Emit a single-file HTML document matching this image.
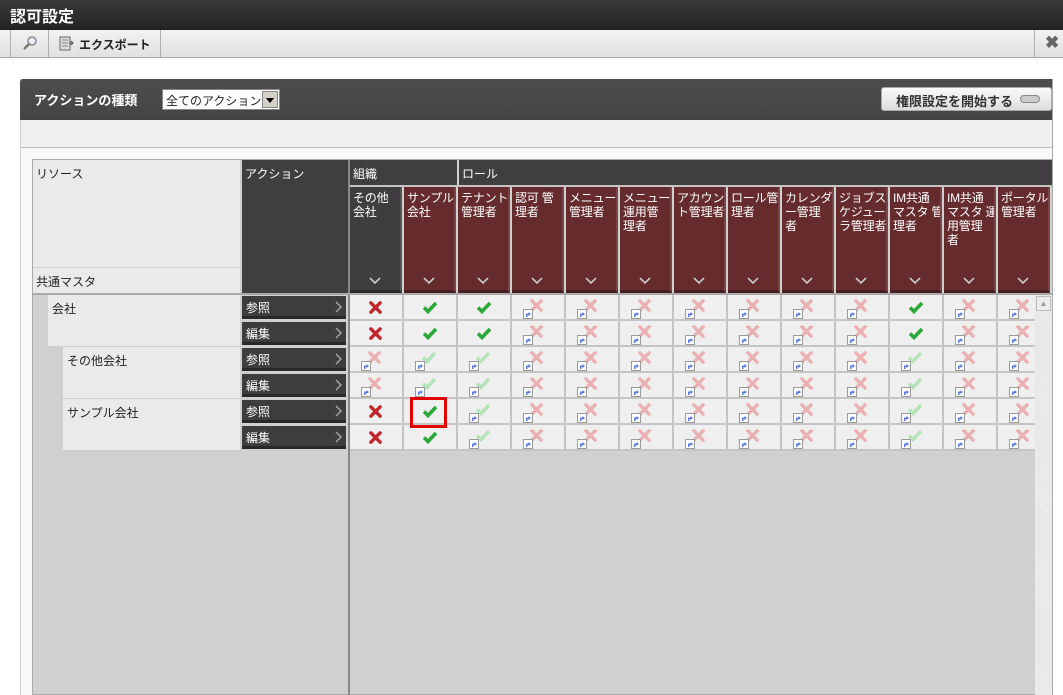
<!DOCTYPE html>
<html><head><meta charset="utf-8">
<style>
*{box-sizing:border-box;margin:0;padding:0}
body{width:1063px;height:695px;overflow:hidden;background:#fff;font-family:"Liberation Sans","Noto Sans CJK JP",sans-serif;font-size:12px;position:relative;color:#222}
.a{position:absolute}
svg{display:block}
.cell{position:absolute;width:52px;height:24px;background:#efefef}
.ic{position:absolute}
.hd{position:absolute;top:187px;width:52px;height:106px;background:#652b2d;color:#fff;font-size:12px;line-height:14px;padding:4px 0 5px 3px;border-right:2px solid #7a4546;border-bottom:3px solid #4a1f21;white-space:nowrap;overflow:hidden;letter-spacing:-0.2px}
.hd.d{background:#3f3d3f;border-right-color:#555;border-bottom-color:#2d2b2d}
.chev{position:absolute;left:19px;top:90px}
.btn{position:absolute;left:242px;width:104px;height:23px;background:#3e3c3e;color:#fff;font-size:12px;padding:3px 4px;border-bottom:3px solid #2a282a}
.btn .gt{position:absolute;right:4px;top:5px}
</style></head><body>
<svg width="0" height="0" style="position:absolute">
<defs>
<symbol id="sx" viewBox="0 0 14 14"><path d="M2 2L12 12M12 2L2 12" stroke="currentColor" stroke-width="3.6" stroke-linecap="round"/></symbol>
<symbol id="sc" viewBox="0 0 16 14"><path d="M2 7.5L6 11.5L14 3" fill="none" stroke="currentColor" stroke-width="3.6" stroke-linejoin="miter"/></symbol>
<symbol id="sl" viewBox="0 0 10 10"><rect x="0.5" y="0.5" width="9" height="9" fill="#fff" stroke="#9a9a9a"/><path d="M3 8V4.5H5.5V3L8 5L5.5 7V6H4.5V8Z" fill="#5a7ae0"/></symbol>
<symbol id="sv" viewBox="0 0 12 7"><path d="M1 1L6 6L11 1" fill="none" stroke="#c9c9c9" stroke-width="1.6"/></symbol>
<symbol id="sg" viewBox="0 0 7 12"><path d="M1 1L6 6L1 11" fill="none" stroke="#aaa" stroke-width="1.4"/></symbol>
</defs></svg>

<div class="a" style="left:0;top:0;width:1063px;height:30px;background:linear-gradient(#3a3a3a,#222);color:#fff;font-size:16px;font-weight:bold;padding:3px 10px">認可設定</div>
<div class="a" style="left:0;top:30px;width:1063px;height:28px;background:linear-gradient(#f2f2f2,#e0e0e0);border-bottom:1px solid #a8a8a8"></div>
<div class="a" style="left:10px;top:30px;width:1px;height:27px;background:#b0b0b0"></div>
<div class="a" style="left:48px;top:30px;width:1px;height:27px;background:#b0b0b0"></div>
<div class="a" style="left:160px;top:30px;width:1px;height:27px;background:#b0b0b0"></div>
<div class="a" style="left:1034px;top:30px;width:1px;height:27px;background:#b0b0b0"></div>
<svg class="a" style="left:22px;top:35px" width="16" height="16" viewBox="0 0 16 16"><circle cx="10" cy="6" r="4" fill="#eef" stroke="#888" stroke-width="1.5"/><path d="M7 9L2 14" stroke="#777" stroke-width="2.4"/></svg>
<svg class="a" style="left:59px;top:36px" width="16" height="15" viewBox="0 0 16 15"><rect x="1" y="1" width="10" height="13" fill="#ddd" stroke="#666"/><path d="M3 4h6M3 7h6M3 10h6" stroke="#888"/><path d="M10 7h4M12 5l2 2-2 2" stroke="#555" fill="none"/></svg>
<div class="a" style="left:79px;top:36px;font-size:12px;font-weight:bold;color:#222">エクスポート</div>
<div class="a" style="left:1045px;top:33px;font-size:17px;font-weight:bold;color:#666">✖</div>

<div class="a" style="left:20px;top:79px;width:1043px;height:616px;background:#f8f8f8;border-left:1px solid #ccc"></div>
<div class="a" style="left:20px;top:79px;width:1043px;height:41px;background:linear-gradient(#4d4d4d,#444);border-radius:3px 3px 0 0"></div>
<div class="a" style="left:34px;top:90px;color:#fff;font-size:13px;font-weight:bold">アクションの種類</div>
<div class="a" style="left:162px;top:89px;width:118px;height:21px;background:#fff;border:1px solid #888;font-size:12px;padding:2px 3px">全てのアクション</div>
<div class="a" style="left:262px;top:91px;width:16px;height:17px;background:#d4d0c8;border:1px solid #888"><div style="margin:6px auto 0;width:0;height:0;border-left:4px solid transparent;border-right:4px solid transparent;border-top:5px solid #000"></div></div>
<div class="a" style="left:881px;top:87px;width:171px;height:24px;background:linear-gradient(#fafafa,#ddd);border:1px solid #aaa;border-radius:3px;font-weight:bold;font-size:13px;padding:3px 14px;color:#333">権限設定を開始する</div>
<div class="a" style="left:1020px;top:95px;width:20px;height:8px;border-radius:4px;background:#ccc;border:1px solid #888"></div>
<div class="a" style="left:21px;top:120px;width:1042px;height:28px;background:#efefef;border-bottom:1px solid #bbb"></div>

<div class="a" style="left:32px;top:159px;width:1021px;height:536px;background:#d1d0d1;border:1px solid #aaa"></div>
<div class="a" style="left:33px;top:160px;width:207px;height:107px;background:#ebe9eb;padding:5px 3px">リソース</div>
<div class="a" style="left:33px;top:268px;width:207px;height:25px;background:#ebe9eb;padding:5px 3px">共通マスタ</div>
<div class="a" style="left:242px;top:160px;width:106px;height:133px;background:#403e40;color:#fff;padding:5px 3px">アクション</div>
<div class="a" style="left:348px;top:160px;width:2px;height:535px;background:#888"></div>
<div class="a" style="left:33px;top:293px;width:1019px;height:2px;background:#aaa"></div>

<div class="a" style="left:350px;top:160px;width:107px;height:25px;background:#403e40;color:#fff;padding:5px 3px">組織</div>
<div class="a" style="left:459px;top:160px;width:593px;height:25px;background:#403e40;color:#fff;padding:5px 3px">ロール</div>

<div class="hd d" style="left:350px">その他<br>会社<svg class="chev" width="12" height="7"><use href="#sv"/></svg></div>
<div class="hd" style="left:404px">サンプル<br>会社<svg class="chev" width="12" height="7"><use href="#sv"/></svg></div>
<div class="hd" style="left:458px">テナント<br>管理者<svg class="chev" width="12" height="7"><use href="#sv"/></svg></div>
<div class="hd" style="left:512px">認可 管<br>理者<svg class="chev" width="12" height="7"><use href="#sv"/></svg></div>
<div class="hd" style="left:566px">メニュー<br>管理者<svg class="chev" width="12" height="7"><use href="#sv"/></svg></div>
<div class="hd" style="left:620px">メニュー<br>運用管<br>理者<svg class="chev" width="12" height="7"><use href="#sv"/></svg></div>
<div class="hd" style="left:674px">アカウン<br>ト管理者<svg class="chev" width="12" height="7"><use href="#sv"/></svg></div>
<div class="hd" style="left:728px">ロール管<br>理者<svg class="chev" width="12" height="7"><use href="#sv"/></svg></div>
<div class="hd" style="left:782px">カレンダ<br>ー管理<br>者<svg class="chev" width="12" height="7"><use href="#sv"/></svg></div>
<div class="hd" style="left:836px">ジョブス<br>ケジュー<br>ラ管理者<svg class="chev" width="12" height="7"><use href="#sv"/></svg></div>
<div class="hd" style="left:890px">IM共通<br>マスタ 管<br>理者<svg class="chev" width="12" height="7"><use href="#sv"/></svg></div>
<div class="hd" style="left:944px">IM共通<br>マスタ 運<br>用管理<br>者<svg class="chev" width="12" height="7"><use href="#sv"/></svg></div>
<div class="hd" style="left:998px">ポータル<br>管理者<svg class="chev" width="12" height="7"><use href="#sv"/></svg></div>
<div class="a" style="left:350px;top:185px;width:702px;height:2px;background:#c4c4c4"></div>

<div class="a" style="left:48px;top:295px;width:192px;height:51px;background:#ebe9eb;padding:5px 4px">会社</div>
<div class="a" style="left:63px;top:347px;width:177px;height:51px;background:#ebe9eb;padding:5px 4px">その他会社</div>
<div class="a" style="left:63px;top:399px;width:177px;height:51px;background:#ebe9eb;padding:5px 4px">サンプル会社</div>

<div class="btn" style="top:296px">参照<svg class="gt" width="7" height="12"><use href="#sg"/></svg></div>
<div class="btn" style="top:322px">編集<svg class="gt" width="7" height="12"><use href="#sg"/></svg></div>
<div class="btn" style="top:348px">参照<svg class="gt" width="7" height="12"><use href="#sg"/></svg></div>
<div class="btn" style="top:374px">編集<svg class="gt" width="7" height="12"><use href="#sg"/></svg></div>
<div class="btn" style="top:400px">参照<svg class="gt" width="7" height="12"><use href="#sg"/></svg></div>
<div class="btn" style="top:426px">編集<svg class="gt" width="7" height="12"><use href="#sg"/></svg></div>

<div class="a" id="grid" style="left:350px;top:295px;width:685px;height:156px;overflow:hidden;background:#c4c4c4"></div>
<div class="a" style="left:1035px;top:295px;width:17px;height:400px;background:repeating-linear-gradient(45deg,#f0f0f0 0 1px,#e2e2e2 1px 2px)"></div>
<div class="a" style="left:1036px;top:296px;width:15px;height:15px;background:#ececec;border:1px solid #bbb;color:#999;font-size:8px;text-align:center;line-height:13px">▲</div>
<div class="a" style="left:1053px;top:79px;width:10px;height:616px;background:#fff"></div>
<div class="a" style="left:1052px;top:79px;width:1px;height:616px;background:#aaa"></div>

<div class="a" style="left:410px;top:397px;width:37px;height:31px;border:3px solid #e00000"></div>

<script>
var rows=[
"XCCxxxxxxxCxx","XCCxxxxxxxCxx",
"xccxxxxxxxcxx","xccxxxxxxxcxx",
"XCcxxxxxxxcxx","XCcxxxxxxxcxx"];
var h='';
for(var r=0;r<6;r++)for(var c=0;c<13;c++){
var t=rows[r][c],L=c*54,T=r*26;
h+='<div class="cell" style="left:'+L+'px;top:'+T+'px">';
if(t=='X')h+='<svg class="ic" style="left:19px;top:6px;color:#c3262b" width="13" height="13"><use href="#sx"/></svg>';
else if(t=='C')h+='<svg class="ic" style="left:18px;top:5px;color:#2aa838" width="16" height="14"><use href="#sc"/></svg>';
else if(t=='x')h+='<svg class="ic" style="left:18px;top:4px;color:#eab0b2" width="13" height="13"><use href="#sx"/></svg><svg class="ic" style="left:11px;top:14px" width="10" height="10"><use href="#sl"/></svg>';
else h+='<svg class="ic" style="left:17px;top:3px;color:#b6e2b9" width="16" height="14"><use href="#sc"/></svg><svg class="ic" style="left:11px;top:14px" width="10" height="10"><use href="#sl"/></svg>';
h+='</div>';}
document.getElementById('grid').innerHTML=h;
</script>
</body></html>
